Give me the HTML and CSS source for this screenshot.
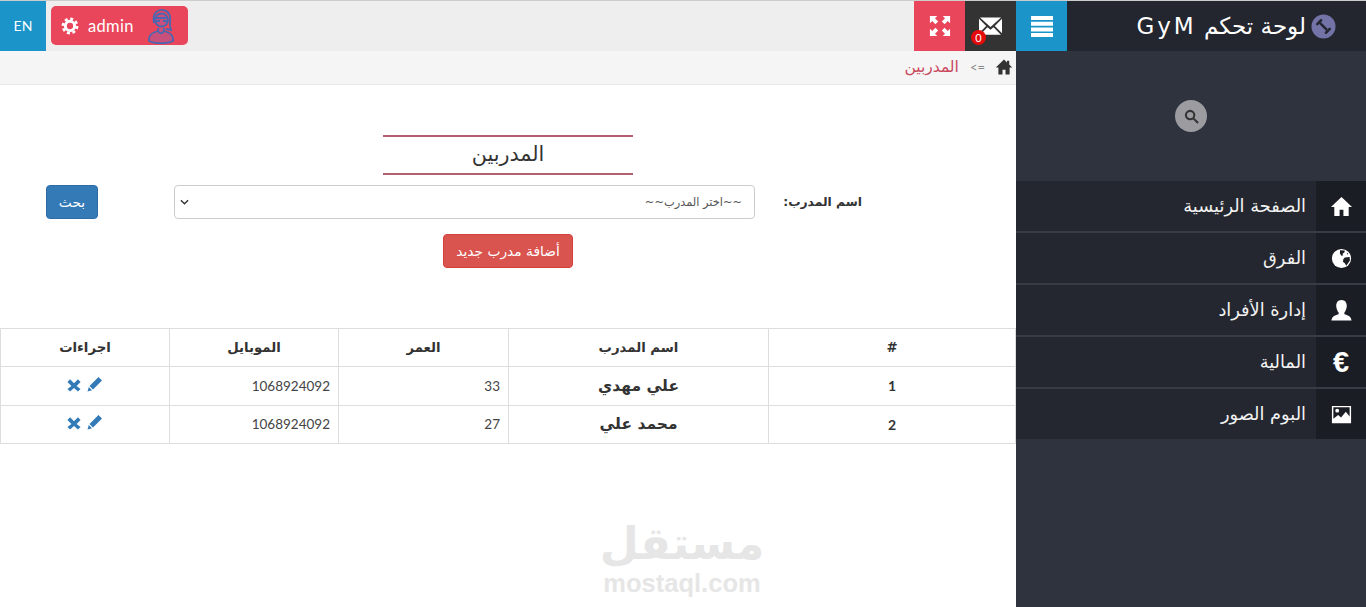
FILE: index.html
```html
<!DOCTYPE html>
<html lang="ar">
<head>
<meta charset="utf-8">
<title>GyM</title>
<link rel="stylesheet" href="styles.css">
</head>
<body>
<div class="app">
  <main class="main">
    <header class="topbar">
      <div class="lang">EN</div>
      <div class="user">
        <svg class="gear" viewBox="0 0 24 24"><circle cx="12" cy="12" r="9.5" fill="none" stroke="#fff" stroke-width="3.5" stroke-dasharray="4 3.46"/><circle cx="12" cy="12" r="6.2" fill="none" stroke="#fff" stroke-width="4"/></svg>
        <span class="user-name">admin</span>
        <svg class="avatar" viewBox="0 0 28 36" fill="none" stroke="#4a66b0" stroke-width="1.8"><path d="M7 15C5 5 11 1 16 2c6 1 8 6 7 13-.4 3 .6 5 1 7l-5-1"/><circle cx="14.500" cy="12" r="6.500" fill="#c9507a"/><path d="M8 10h13M9 13h4M16 13h4"/><path d="M11 20v3c-4 1-9 3-9 8v2c6 3 18 3 24 0v-2c0-5-5-7-9-8v-3" fill="#c9507a"/><path d="M11 23c2 3 4 3 6 0" /></svg>
      </div>
      <div class="spacer"></div>
      <div class="tool tool-red">
        <svg viewBox="0 0 24 24" fill="#fff"><path d="M1 1h8L6.500 3.500 10 7 7 10 3.500 6.500 1 9zM23 1v8l-2.500-2.500L17 10l-3-3 3.500-3.500L15 1zM1 23v-8l2.500 2.500L7 14l3 3-3.500 3.500L9 23zM23 23h-8l2.500-2.500L14 17l3-3 3.500 3.500L23 15z"/></svg>
      </div>
      <div class="tool tool-dark">
        <svg viewBox="0 0 24 18"><path fill="#fff" d="M1 0h22L12 10zM0 1.500 7.500 9 0 16.500zM24 1.500v15L16.500 9zM8.800 10.200 12 13l3.200-2.800L22.800 18H1.200z"/></svg>
        <span class="badge">0</span>
      </div>
    </header>
    <nav class="crumbs">
      <svg class="crumb-home" viewBox="0 0 24 24"><path fill="#333" d="M12 2 1 12.500h3.500V22H10v-6.500h4V22h5.500v-9.500H23l-4-3.800V3.500h-3v2.400z"/></svg>
      <span class="crumb-sep">=&gt;</span>
      <span class="crumb-link">المدربين</span>
    </nav>
    <section class="content">
      <h1 class="title">المدربين</h1>
      <form class="filter">
        <label class="filter-label">اسم المدرب:</label>
        <div class="select">
          <span>~~اختر المدرب~~</span>
          <svg viewBox="0 0 10 6"><path d="M1 1l4 4 4-4" fill="none" stroke="#333" stroke-width="1.500"/></svg>
        </div>
        <button type="button" class="btn btn-blue">بحث</button>
      </form>
      <div class="add-row"><button type="button" class="btn btn-red">أضافة مدرب جديد</button></div>
      <table class="grid">
        <thead>
          <tr><th class="c1">#</th><th class="c2">اسم المدرب</th><th class="c3">العمر</th><th class="c4">الموبايل</th><th class="c5">اجراءات</th></tr>
        </thead>
        <tbody>
          <tr>
            <td class="num">1</td><td class="name">علي مهدي</td><td class="val">33</td><td class="val">1068924092</td>
            <td class="acts">
              <svg class="ic-edit" viewBox="0 0 16 16"><path fill="#337ab7" d="M11.500 1 15 4.500 6 13.500 2.500 10zM1.800 11 5 14.200 .5 15.500z"/></svg>
              <svg class="ic-del" viewBox="0 0 16 16"><path fill="#337ab7" d="M3.500 1.500 8 6l4.500-4.500 3 3L11 9l4.500 3.500-3 3L8 11.500l-4.500 4-3-3L5 9 .5 4.500z"/></svg>
            </td>
          </tr>
          <tr>
            <td class="num">2</td><td class="name">محمد علي</td><td class="val">27</td><td class="val">1068924092</td>
            <td class="acts">
              <svg class="ic-edit" viewBox="0 0 16 16"><path fill="#337ab7" d="M11.500 1 15 4.500 6 13.500 2.500 10zM1.800 11 5 14.200 .5 15.500z"/></svg>
              <svg class="ic-del" viewBox="0 0 16 16"><path fill="#337ab7" d="M3.500 1.500 8 6l4.500-4.500 3 3L11 9l4.500 3.500-3 3L8 11.500l-4.500 4-3-3L5 9 .5 4.500z"/></svg>
            </td>
          </tr>
        </tbody>
      </table>
      <div class="mark"><div class="mark-ar">مستقل</div><div class="mark-en">mostaql.com</div></div>
    </section>
  </main>
  <aside class="side">
    <header class="side-head">
      <div class="toggle">
        <svg viewBox="0 0 22 21" fill="#fff"><path d="M0 0h22v4H0zM0 5.700h22v4H0zM0 11.400h22v4H0zM0 17h22v4H0z"/></svg>
      </div>
      <div class="brand">
        <svg class="brand-ico" viewBox="0 0 26 26"><circle cx="13" cy="13" r="12.500" fill="#7473a8"/><g stroke="#23262e" stroke-width="2.600" stroke-linecap="round"><path d="M10 10l6 6"/><path d="M10.500 6.500l-4 4M19.500 15.500l-4 4"/></g></svg>
        <span>لوحة تحكم <span class="brand-latin">GyM</span></span>
      </div>
    </header>
    <div class="side-search">
      <div class="search-ball"><svg viewBox="0 0 16 16" fill="none" stroke="#333" stroke-width="2.200"><circle cx="6.500" cy="6.500" r="4.500"/><path d="M10 10l5 5"/></svg></div>
    </div>
    <ul class="menu">
      <li><span class="mi"><svg viewBox="0 0 24 24"><path fill="#fff" d="M12 2 1 12.500h3.500V22H10v-6.500h4V22h5.500v-9.500H23z"/></svg></span><span class="ml">الصفحة الرئيسية</span></li>
      <li><span class="mi"><svg viewBox="0 0 24 24"><circle cx="12" cy="12" r="10" fill="#fff"/><path fill="#1c1e24" d="M10.500 3.500l5 .2-.5 2-2 1.300.8 1.500-2 .5-1.500-2.500zM15.500 11l5-.5.300 3.500-3.800 5.500-1.500-2.500-2-1.500.5-3zM17.500 6l1.500 1-1 1z"/></svg></span><span class="ml">الفرق</span></li>
      <li><span class="mi"><svg viewBox="0 0 24 24"><path fill="#fff" d="M12 1c4 0 5.500 3 5.500 6 0 3-1.500 6-2.500 7v2c3 1 7 2 7.500 6.500h-21C2 18 6 17 9 16v-2C8 13 6.500 10 6.500 7c0-3 1.500-6 5.500-6z"/></svg></span><span class="ml">إدارة الأفراد</span></li>
      <li><span class="mi mi-euro">€</span><span class="ml">المالية</span></li>
      <li><span class="mi"><svg viewBox="0 0 24 24"><path fill="#fff" fill-rule="evenodd" d="M2 3h20v18H2zM3.500 4.500v12l5-4 3 2.500 5-6 4 5v-9.500z"/><circle cx="7.500" cy="8" r="2" fill="#fff"/></svg></span><span class="ml">البوم الصور</span></li>
    </ul>
  </aside>
</div>
</body>
</html>
```
FILE: styles.css
```css
* { box-sizing: border-box; }
html, body { margin: 0; height: 100%; }
body { font-family: "DejaVu Sans", "Noto Sans", sans-serif; color: #333; background: #fff; overflow: hidden; }
svg { display: block; }
.app { display: flex; height: 607px; }
.main { width: 1016px; flex: none; display: flex; flex-direction: column; position: relative; }
.side { flex: 1; background: #2f333e; direction: rtl; }

.topbar { height: 51px; display: flex; background: #eee; border-top: 1px solid #ccc; }
.lang { width: 46px; background: #1a94c9; color: #fff; font: 14px/50px "Lato", sans-serif; text-align: center; }
.user { width: 137px; height: 39px; margin: 5px 0 0 5px; background: #e9465b; border-radius: 5px; display: flex; align-items: center; padding: 0 10px; color: #fff; }
.gear { width: 18px; height: 18px; margin-right: 9px; flex: none; }
.user-name { font: 16.500px "Lato", sans-serif; letter-spacing: .3px; width: 59px; flex: none; }
.avatar { width: 28px; height: 36px; flex: none; }
.spacer { flex: 1; }
.tool { width: 51px; display: flex; align-items: center; justify-content: center; position: relative; }
.tool-red { background: #e9465b; }
.tool-red svg { width: 22px; height: 22px; }
.tool-dark { background: #333; }
.tool-dark svg { width: 23px; height: 18px; }
.badge { position: absolute; left: 6px; top: 29px; width: 15px; height: 15px; border-radius: 50%; background: #e30b0b; color: #fff; font: 11px/15px "Lato", sans-serif; text-align: center; }

.crumbs { height: 34px; background: #f5f5f5; border-bottom: 1px solid #e8e8e8; display: flex; direction: rtl; align-items: center; padding-right: 3px; }
.crumb-home { width: 18px; height: 18px; margin-bottom: 2px; }
.crumb-sep { font: 13px "Lato", sans-serif; color: #888; margin: 0 10px 2px 11px; }
.crumb-link { font-size: 15.500px; color: #c9485d; margin-bottom: 2px; }

.content { flex: 1; position: relative; }
.title { width: 250px; height: 40px; margin: 50px auto 0; border-top: 2px solid #b0606e; border-bottom: 2px solid #b0606e; font-size: 20.700px; font-weight: 400; line-height: 34px; text-align: center; }
.filter { display: flex; align-items: center; direction: rtl; height: 34px; margin-top: 10px; padding-right: 154px; padding-left: 46px; }
.filter-label { width: 107px; font-size: 12.300px; font-weight: 700; text-align: right; flex: none; }
.select { width: 581px; height: 34px; flex: none; border: 1px solid #ccc; border-radius: 4px; display: flex; align-items: center; justify-content: space-between; padding: 0 12px 0 5px; font-size: 11.400px; color: #555; }
.select svg { width: 9px; height: 6px; }
.btn { border: 1px solid transparent; border-radius: 4px; color: #fff; font-family: inherit; font-size: 13.800px; height: 34px; padding: 0; }
.btn-blue { width: 52px; margin-right: auto; background: #337ab7; border-color: #2e6da4; }
.btn-red { width: 130px; background: #d9534f; border-color: #d43f3a; }
.add-row { display: flex; justify-content: center; margin-top: 15px; }

.grid { width: 1015px; margin-top: 60px; border-collapse: collapse; direction: rtl; table-layout: fixed; font-size: 15.500px; }
.grid th, .grid td { border: 1px solid #ddd; padding: 0 8px; text-align: center; }
.grid th { height: 38px; font-weight: 700; font-size: 13.300px; }
.grid td { height: 38.500px; }
.c1 { width: 247px; }
.c2 { width: 260px; }
.c3 { width: 170px; }
.c4 { width: 169px; }
.c5 { width: 169px; }
.grid .name { font-weight: 700; }
.grid .val { text-align: right; direction: ltr; font-family: "Lato", sans-serif; font-size: 13.500px; color: #444; }
.grid .num { font-family: "Lato", sans-serif; font-weight: 700; font-size: 14px; }
.acts { white-space: nowrap; }
.acts svg { display: inline-block; margin: 0 1px; }
.ic-edit { width: 16px; height: 16px; }
.ic-del { width: 14px; height: 14px; }

.mark { position: absolute; left: 582px; top: 431px; width: 200px; text-align: center; color: #e6e6e6; font-weight: 700; }
.mark-ar { font-size: 45px; line-height: 56px; direction: rtl; }
.mark-en { font: 700 25.500px/22px "Liberation Sans", sans-serif; }

.side-head { height: 51px; display: flex; background: #23262e; border-top: 1px solid #ccc; flex-direction: row-reverse; }
.toggle { width: 51px; background: #1a94c9; display: flex; align-items: center; justify-content: center; }
.toggle svg { width: 22px; height: 21px; }
.brand { flex: 1; display: flex; align-items: center; color: #fff; font-size: 23px; letter-spacing: .5px; padding-right: 30px; gap: 5px; }
.brand-latin { letter-spacing: 3px; }
.brand-ico { width: 25px; height: 25px; flex: none; }
.side-search { height: 130px; display: flex; justify-content: center; align-items: center; }
.search-ball { width: 32px; height: 32px; border-radius: 50%; background: #9b9ba0; display: flex; align-items: center; justify-content: center; }
.search-ball svg { width: 15px; height: 15px; }
.menu { list-style: none; margin: 0; padding: 0; background: #383b44; }
.menu li { height: 50px; margin-bottom: 2px; display: flex; background: #24272f; color: #fff; font-size: 17.800px; }
.menu li:last-child { margin-bottom: 0; }
.mi { width: 50px; background: #1b1d24; display: flex; align-items: center; justify-content: center; flex: none; }
.mi svg { width: 23px; height: 23px; }
.mi-euro { font: 700 29px "Liberation Sans", sans-serif; }
.ml { padding: 0 10px; line-height: 49px; color: #f2f2f2; }
```
